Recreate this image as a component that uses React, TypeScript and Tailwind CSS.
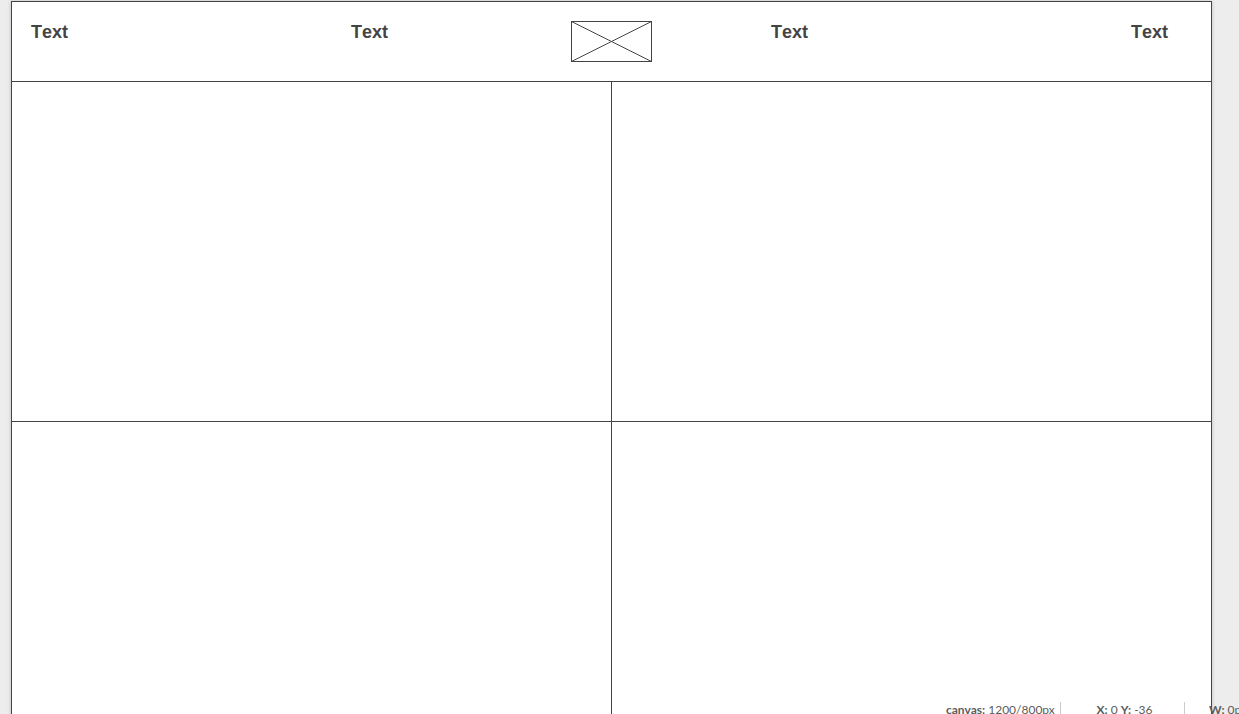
const navLink = "text-lg leading-5 font-bold text-[#444] [font-kerning:none]";

function Placeholder() {
  return (
    <svg
      className="block h-[41px] w-[81px]"
      viewBox="0 0 81 41"
      fill="none"
      stroke="#444"
      role="img"
      aria-label="Image placeholder"
    >
      <rect x="0.5" y="0.5" width="80" height="40" />
      <path d="M0.5 0.5L80.5 40.5M80.5 0.5L0.5 40.5" />
    </svg>
  );
}

function StatusBar() {
  return (
    <footer className="absolute right-0 bottom-0 flex h-3 overflow-hidden font-['Lato',sans-serif] text-xs leading-4 whitespace-nowrap text-[#5c5c5c]">
      <div className="w-[115px] border-r border-[#ccc]">
        <b>canvas:</b> 1200/800px
      </div>
      <div className="w-[124px] border-r border-[#ccc] pl-1 text-center">
        <b>X:</b> 0 <b>Y:</b> -36
      </div>
      <div className="w-[54px] pl-6">
        <b>W:</b> 0px
      </div>
    </footer>
  );
}

export default function App() {
  return (
    <div className="relative h-screen overflow-hidden bg-[#ededed] pt-px pr-[27px] pl-[11px] font-['Liberation_Sans',Arial,sans-serif]">
      <div className="min-h-[800px] border border-[#444] bg-white shadow-[0_0_4px_rgba(0,0,0,0.2)]">
        <header className="border-b border-[#444]">
          <nav className="grid h-[79px] grid-cols-[320fr_220fr_200fr_360fr_80fr] items-start pt-5 pl-[19px]">
            <a href="#" className={navLink}>Text</a>
            <a href="#" className={navLink}>Text</a>
            <div className="-mt-px">
              <Placeholder />
            </div>
            <a href="#" className={navLink}>Text</a>
            <a href="#" className={navLink}>Text</a>
          </nav>
        </header>
        <main className="grid grid-cols-2 gap-px bg-[#444]">
          <section className="h-[339px] bg-white" />
          <section className="h-[339px] bg-white" />
          <section className="h-[379px] bg-white" />
          <section className="h-[379px] bg-white" />
        </main>
      </div>
      <StatusBar />
    </div>
  );
}
